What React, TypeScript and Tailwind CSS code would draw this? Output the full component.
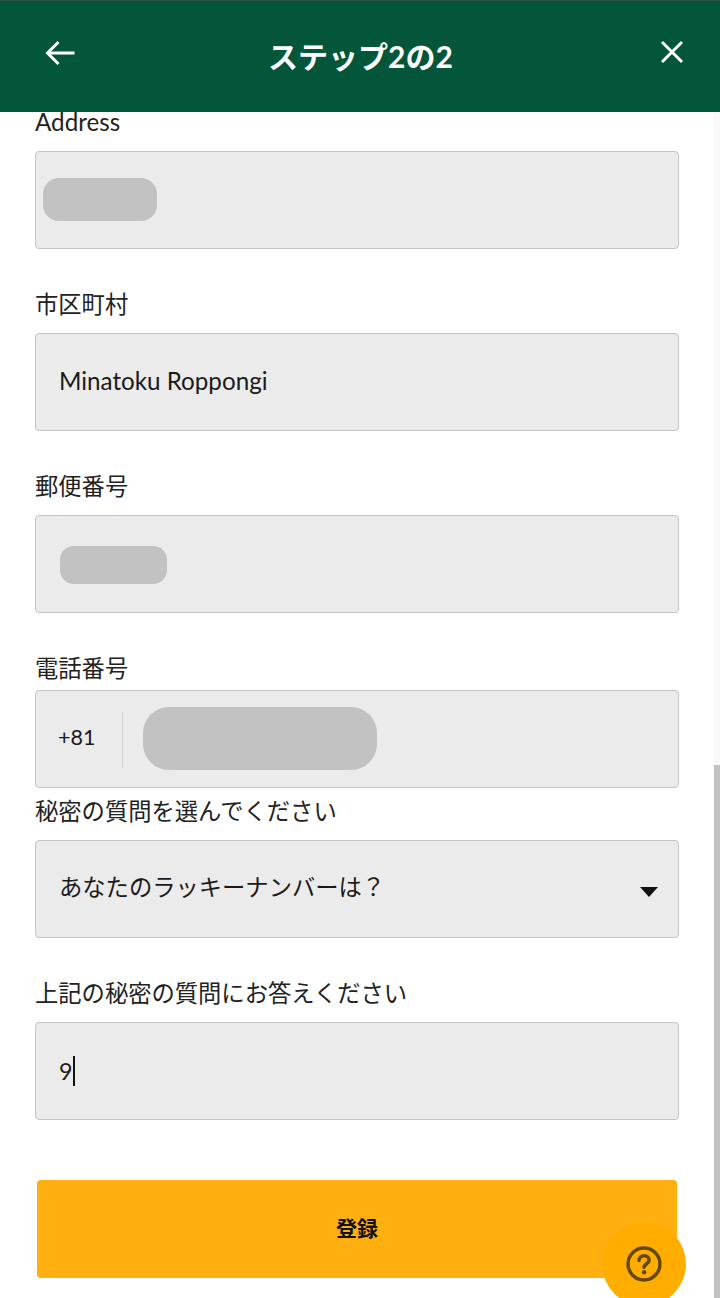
const fontStack = 'font-[Lato,"Noto_Sans_CJK_JP",sans-serif]';
const boxClass =
  'h-[98px] rounded-[4px] border border-[#c4c4c4] bg-[#ebebeb] flex items-center text-[23.3px] text-[#1a1a1a]';
const labelClass = 'h-8 leading-[32px] text-[23.3px] text-[#222222]';

function BackIcon() {
  return (
    <svg width="30" height="26" viewBox="0 0 30 26" fill="none" stroke="white" strokeWidth="3">
      <path d="M29.5 13H3" />
      <path d="M13.5 2 2.5 13l11 11" />
    </svg>
  );
}

function CloseIcon() {
  return (
    <svg width="24" height="24" viewBox="0 0 24 24" fill="none" stroke="white" strokeWidth="3">
      <path d="M2 2l20 20M22 2 2 22" />
    </svg>
  );
}

function HelpIcon() {
  return (
    <svg width="36" height="36" viewBox="0 0 36 36" fill="none">
      <circle cx="18" cy="18" r="16" stroke="#664700" strokeWidth="3.4" />
      <path
        d="M13 14.4c0-2.8 2.2-4.6 5.1-4.6s5 1.8 5 4.2c0 3.6-4.7 3.7-5 7.2"
        stroke="#664700"
        strokeWidth="3.6"
        strokeLinecap="round"
      />
      <circle cx="18.1" cy="26.2" r="2.2" fill="#664700" />
    </svg>
  );
}

export default function App() {
  return (
    <div className={`relative h-[1298px] w-[720px] overflow-hidden bg-white ${fontStack}`}>
      <header className="h-[112px] border-t border-[#2f4f43] bg-[#03563a] flex items-center pl-[45px] pr-[36px] text-white">
        <div className="-mt-[7px]">
          <BackIcon />
        </div>
        <h1 className="flex-1 pr-[14px] text-center text-[30px] font-bold">ステップ2の2</h1>
        <div className="-mt-[9px]">
          <CloseIcon />
        </div>
      </header>
      <div className="flex">
        <main className="w-[714px] px-[35px]">
          <div className="h-5 leading-[20px] text-[24.2px] text-[#222222]">Address</div>
          <div className={`${boxClass} mt-[19px] pl-[7px]`}>
            <div className="-mt-[2px] h-[43px] w-[114px] rounded-[16px] bg-[#c2c2c2]" />
          </div>

          <div className={`${labelClass} mt-[39px] mb-[13px]`}>市区町村</div>
          <div className={`${boxClass} pl-[23px]`}>
            <span className="-mt-[2px] text-[24.2px]">Minatoku Roppongi</span>
          </div>

          <div className={`${labelClass} mt-[39px] mb-[13px]`}>郵便番号</div>
          <div className={`${boxClass} pl-[24px]`}>
            <div className="mt-[2px] h-[38px] w-[107px] rounded-[14px] bg-[#c2c2c2]" />
          </div>

          <div className={`${labelClass} mt-[39px] mb-[6px]`}>電話番号</div>
          <div className={`${boxClass} pl-[22px]`}>
            <span className="-mt-[4px] w-[64px] text-[21.5px]">+81</span>
            <div className="mt-[1px] h-[56px] w-px bg-[#cfcfcf]" />
            <div className="-mt-[2px] ml-[20px] h-[63px] w-[234px] rounded-[26px] bg-[#c2c2c2]" />
          </div>

          <div className={`${labelClass} mt-[7px] mb-[13px]`}>秘密の質問を選んでください</div>
          <div className={`${boxClass} pl-[23px] pr-[20px] justify-between`}>
            <span className="-mt-[4px]">あなたのラッキーナンバーは？</span>
            <div className="mt-[6px] h-0 w-0 border-x-[9px] border-t-[10px] border-x-transparent border-t-[#111111]" />
          </div>

          <div className={`${labelClass} mt-[39px] mb-[13px]`}>上記の秘密の質問にお答えください</div>
          <div className={`${boxClass} pl-[23px]`}>
            <span>9</span>
            <div className="h-[30px] w-[2px] bg-[#111111]" />
          </div>

          <button
            type="button"
            className="mx-[2px] mt-[60px] h-[98px] w-[640px] rounded-[4px] bg-[#ffb010] pb-[2px] text-[21px] font-bold text-[#111111]"
          >
            登録
          </button>
        </main>
        <aside className="h-[1186px] w-[6px] bg-[#fafafa]">
          <div className="mt-[653px] h-[533px] bg-[#c2c2c2]" />
        </aside>
      </div>
      <button
        type="button"
        className="absolute left-[602px] top-[1222px] flex h-[84px] w-[84px] items-center justify-center rounded-full bg-[#ffae00]"
      >
        <HelpIcon />
      </button>
    </div>
  );
}
